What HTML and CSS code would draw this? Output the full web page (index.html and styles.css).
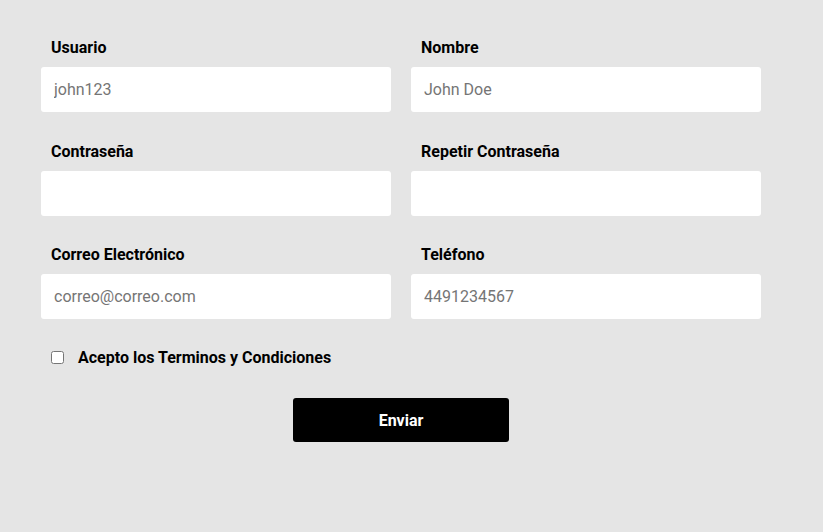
FILE: index.html
```html
<!DOCTYPE html>
<html lang="es">
<head>
<meta charset="utf-8">
<title>Registro</title>
<link rel="stylesheet" href="styles.css">
</head>
<body>
<form class="form">
  <div class="grid">
    <div class="field">
      <label class="label" for="usuario">Usuario</label>
      <input class="input" id="usuario" type="text" placeholder="john123">
    </div>
    <div class="field">
      <label class="label" for="nombre">Nombre</label>
      <input class="input" id="nombre" type="text" placeholder="John Doe">
    </div>
    <div class="field">
      <label class="label" for="pass">Contraseña</label>
      <input class="input" id="pass" type="password">
    </div>
    <div class="field">
      <label class="label" for="pass2">Repetir Contraseña</label>
      <input class="input" id="pass2" type="password">
    </div>
    <div class="field">
      <label class="label" for="correo">Correo Electrónico</label>
      <input class="input" id="correo" type="email" placeholder="correo@correo.com">
    </div>
    <div class="field">
      <label class="label" for="tel">Teléfono</label>
      <input class="input" id="tel" type="tel" placeholder="4491234567">
    </div>
  </div>
  <div class="terms">
    <input class="check" id="terms" type="checkbox">
    <label class="terms-label" for="terms">Acepto los Terminos y Condiciones</label>
  </div>
  <div class="actions">
    <button class="btn" type="submit">Enviar</button>
  </div>
</form>
</body>
</html>
```
FILE: styles.css
```css
html, body {
  margin: 0;
  background: #e5e5e5;
  font-family: Roboto, "Liberation Sans", sans-serif;
}
.form {
  width: 720px;
  padding: 38px 0 0 41px;
}
.grid {
  display: grid;
  grid-template-columns: 350px 350px;
  column-gap: 20px;
  row-gap: 29.5px;
}
.field {
  display: flex;
  flex-direction: column;
}
.label {
  font-size: 16px;
  font-weight: 700;
  line-height: 19px;
  color: #000;
  padding-left: 10px;
  margin-bottom: 10px;
}
.input {
  box-sizing: border-box;
  height: 45px;
  width: 350px;
  border: none;
  border-radius: 3px;
  background: #fff;
  padding: 0 13px;
  font-family: Roboto, "Liberation Sans", sans-serif;
  font-size: 16px;
  color: #000;
  outline: none;
}
.input::placeholder {
  color: #757575;
}
.terms {
  display: flex;
  align-items: center;
  margin-top: 28px;
  height: 20px;
  padding-left: 8px;
}
.check {
  width: 13px;
  height: 13px;
  margin: 0 14px 0 2px;
}
.terms-label {
  font-size: 16px;
  font-weight: 700;
  color: #000;
}
.actions {
  display: flex;
  justify-content: center;
  margin-top: 31px;
}
.btn {
  width: 216px;
  height: 44px;
  background: #000;
  color: #fff;
  border: none;
  border-radius: 3px;
  font-family: Roboto, "Liberation Sans", sans-serif;
  font-size: 16px;
  font-weight: 700;
}
```
